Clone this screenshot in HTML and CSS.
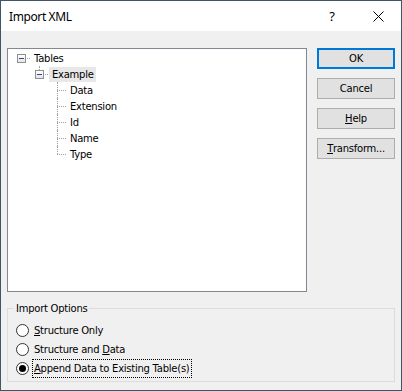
FILE: index.html
```html
<!DOCTYPE html>
<html>
<head>
<meta charset="utf-8">
<link rel="stylesheet" href="styles.css">
</head>
<body>
<div class="window">
  <div class="titlebar">
    <span class="title">Import XML</span>
    <span class="tb-btn help">?</span>
    <span class="tb-btn close"><svg width="11" height="11" viewBox="0 0 11 11"><path d="M0.5 0.5 L10.5 10.5 M10.5 0.5 L0.5 10.5" stroke="#000" stroke-width="1" fill="none"/></svg></span>
  </div>
  <div class="body">
    <div class="top">
      <div class="tree">
        <div class="row"><span class="cell root"><span class="box"></span></span><span class="label">Tables</span></div>
        <div class="row"><span class="indent"></span><span class="cell last"><span class="box"></span></span><span class="label sel">Example</span></div>
        <div class="row"><span class="indent"></span><span class="indent"></span><span class="cell mid"></span><span class="label">Data</span></div>
        <div class="row"><span class="indent"></span><span class="indent"></span><span class="cell mid"></span><span class="label">Extension</span></div>
        <div class="row"><span class="indent"></span><span class="indent"></span><span class="cell mid"></span><span class="label">Id</span></div>
        <div class="row"><span class="indent"></span><span class="indent"></span><span class="cell mid"></span><span class="label">Name</span></div>
        <div class="row"><span class="indent"></span><span class="indent"></span><span class="cell last"></span><span class="label">Type</span></div>
      </div>
      <div class="buttons">
        <div class="btn default">OK</div>
        <div class="btn">Cancel</div>
        <div class="btn"><u>H</u>elp</div>
        <div class="btn"><u>T</u>ransform...</div>
      </div>
    </div>
    <fieldset class="options">
      <legend>Import Options</legend>
      <div class="radio-row"><span class="radio"></span><span class="rlabel"><u>S</u>tructure Only</span></div>
      <div class="radio-row"><span class="radio"></span><span class="rlabel">Structure and <u>D</u>ata</span></div>
      <div class="radio-row"><span class="radio checked"></span><span class="rlabel focus"><u>A</u>ppend Data to Existing Table(s)</span></div>
    </fieldset>
  </div>
</div>
</body>
</html>
```
FILE: styles.css
```css
html, body {
  margin: 0;
  padding: 0;
  background: #f0f0f0;
}
body {
  font-family: "DejaVu Sans", sans-serif;
  font-size: 10px;
  letter-spacing: -0.25px;
  color: #000;
}
.window {
  width: 402px;
  height: 391px;
  box-sizing: border-box;
  border: 1px solid #3f5568;
  background: #f0f0f0;
  display: flex;
  flex-direction: column;
}
.titlebar {
  height: 30px;
  flex: none;
  background: #fff;
  display: flex;
  align-items: center;
  font-family: "Noto Sans", sans-serif;
  font-size: 12px;
  letter-spacing: 0;
}
.title {
  flex: 1;
  padding-left: 8px;
  letter-spacing: -0.4px;
}
.tb-btn {
  width: 46px;
  height: 30px;
  display: flex;
  align-items: center;
  justify-content: center;
}
.help {
  font-size: 13px;
}
.body {
  flex: 1;
  padding: 17px 6px 8px 6px;
  display: flex;
  flex-direction: column;
}
.top {
  display: flex;
  gap: 10px;
}
.tree {
  width: 300px;
  height: 244px;
  box-sizing: border-box;
  border: 1px solid #828790;
  background: #fff;
  padding: 1px 0 0 4px;
}
.row {
  display: flex;
  height: 16px;
  align-items: center;
}
.indent {
  width: 18px;
  flex: none;
}
.cell {
  position: relative;
  width: 18px;
  height: 16px;
  flex: none;
  display: flex;
  align-items: flex-start;
}
.cell::after {
  content: "";
  position: absolute;
  left: 9px;
  right: 0;
  top: 8px;
  border-top: 1px dotted #a0a0a0;
}
.cell.mid::before {
  content: "";
  position: absolute;
  left: 9px;
  top: 0;
  bottom: 0;
  border-left: 1px dotted #a0a0a0;
}
.cell.last::before {
  content: "";
  position: absolute;
  left: 9px;
  top: 0;
  height: 8px;
  border-left: 1px dotted #a0a0a0;
}
.box {
  position: relative;
  z-index: 1;
  width: 9px;
  height: 9px;
  box-sizing: border-box;
  margin: 4px 0 0 5px;
  border: 1px solid #8e8f8f;
  background: linear-gradient(#ffffff, #e3e3e3);
}
.box::before {
  content: "";
  position: absolute;
  left: 1px;
  top: 3px;
  width: 5px;
  height: 1px;
  background: #2b4a9a;
}
.label {
  margin-left: 1px;
  padding: 0 2px 0 3px;
  height: 15px;
  line-height: 15px;
  white-space: nowrap;
}
.label.sel {
  background: #e8e8e8;
}
.buttons {
  display: flex;
  flex-direction: column;
  gap: 9px;
  width: 78px;
}
.btn {
  height: 21px;
  box-sizing: border-box;
  border: 1px solid #adadad;
  background: #e1e1e1;
  display: flex;
  align-items: center;
  justify-content: center;
}
.btn.default {
  border: 2px solid #0078d7;
}
.options {
  margin: 10px 0 0 0;
  padding: 6px 0 3px 6px;
  border: 1px solid #dcdcdc;
}
.options legend {
  padding: 0 2px;
  line-height: 13px;
  margin-left: 0;
}
.radio-row {
  height: 19px;
  display: flex;
  align-items: center;
}
.radio {
  position: relative;
  width: 13px;
  height: 13px;
  box-sizing: border-box;
  border: 1px solid #333;
  border-radius: 50%;
  background: #fff;
  margin-left: 2px;
  flex: none;
}
.radio.checked::after {
  content: "";
  position: absolute;
  left: 2px;
  top: 2px;
  width: 7px;
  height: 7px;
  border-radius: 50%;
  background: #000;
}
.rlabel {
  margin-left: 3px;
  padding: 1px 1px;
  line-height: 15px;
  white-space: nowrap;
  border: 1px solid transparent;
}
.rlabel.focus {
  border: 1px dotted #000;
}
```
